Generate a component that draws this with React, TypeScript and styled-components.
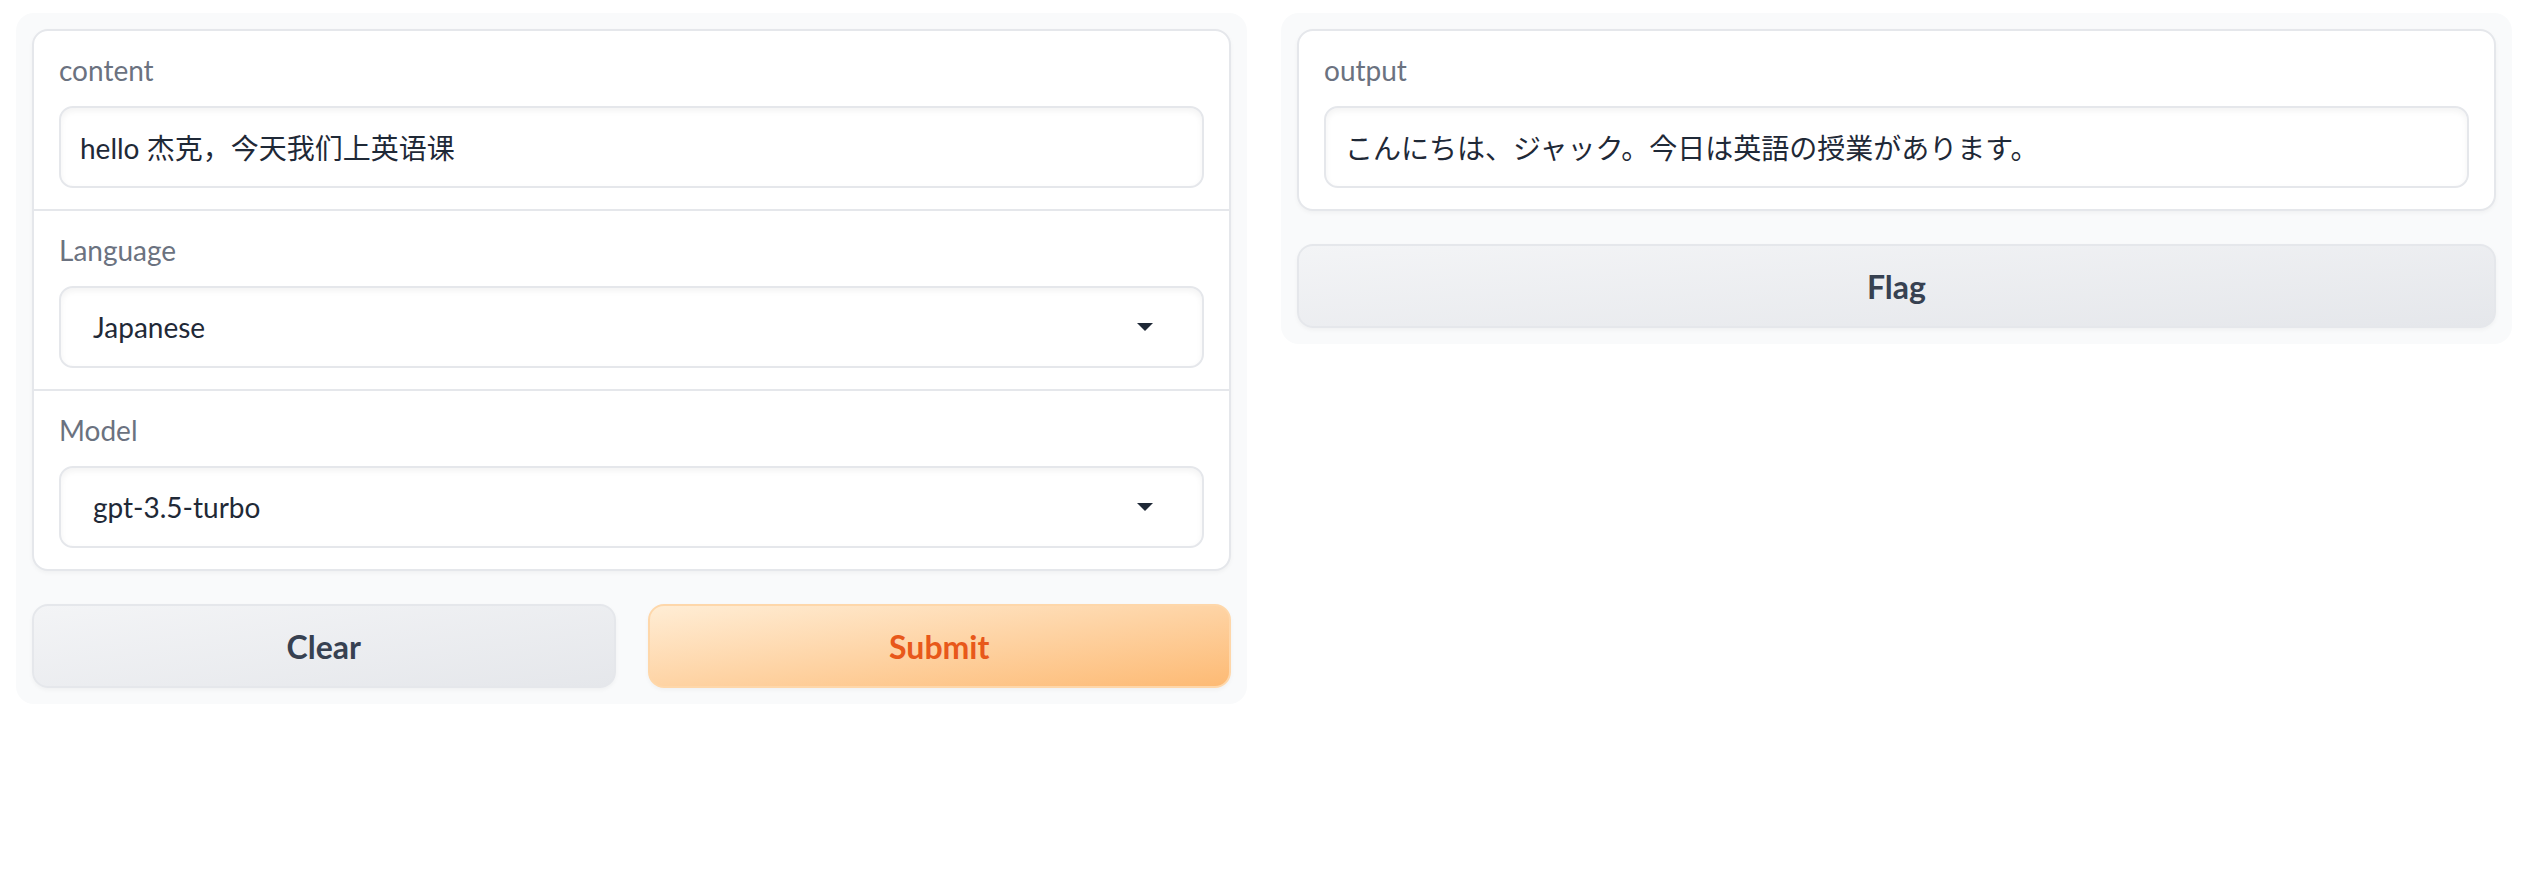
import React from "react";
import styled, { createGlobalStyle } from "styled-components";

const GlobalStyle = createGlobalStyle`
  html, body {
    margin: 0;
    padding: 0;
    background: #ffffff;
  }
  body {
    font-family: "Lato", "Noto Sans CJK SC", sans-serif;
    -webkit-font-smoothing: antialiased;
  }
  * { box-sizing: border-box; }
`;

const Page = styled.div`
  display: flex;
  align-items: flex-start;
  gap: 34px;
  padding: 13px 24px 0 16px;
`;

const Panel = styled.div`
  flex: 1 1 0;
  min-width: 0;
  display: flex;
  flex-direction: column;
  gap: 33px;
  padding: 16px;
  background: #f9fafb;
  border-radius: 18px;
`;

const Form = styled.div`
  display: flex;
  flex-direction: column;
  background: #ffffff;
  border: 2px solid #e5e7eb;
  border-radius: 16px;
  overflow: hidden;
  box-shadow: 0 2px 4px rgba(0, 0, 0, 0.04);
`;

const Field = styled.div`
  display: flex;
  flex-direction: column;
  gap: 15px;
  padding: 18px 25px 21px;
  & + & {
    border-top: 2px solid #e5e7eb;
  }
`;

const Label = styled.span`
  display: block;
  font-size: 28px;
  line-height: 42px;
  color: #6b7280;
`;

const TextBox = styled.input<{ $lang?: string }>`
  display: block;
  width: 100%;
  height: 82px;
  margin: 0;
  padding: 0 19px;
  border: 2px solid #e5e7eb;
  border-radius: 14px;
  background: #ffffff;
  box-shadow: inset 0 3px 6px rgba(0, 0, 0, 0.05);
  font-family: ${(p) =>
    p.$lang === "ja"
      ? `"Lato", "Noto Sans CJK JP", sans-serif`
      : `"Lato", "Noto Sans CJK SC", sans-serif`};
  font-size: 28px;
  line-height: 42px;
  color: #1f2937;
  outline: none;
`;

const Select = styled.div`
  display: flex;
  align-items: center;
  justify-content: space-between;
  height: 82px;
  padding: 0 49px 0 32px;
  border: 2px solid #e5e7eb;
  border-radius: 14px;
  background: #ffffff;
  box-shadow: inset 0 3px 6px rgba(0, 0, 0, 0.05);
  font-size: 28px;
  line-height: 42px;
  color: #1f2937;
`;

const Arrow = styled.svg`
  width: 16px;
  height: 8px;
  flex: none;
`;

const ButtonRow = styled.div`
  display: grid;
  grid-template-columns: 1fr 1fr;
  gap: 32px;
`;

const Button = styled.button<{ $variant?: "primary" | "secondary" }>`
  height: 84px;
  margin: 0;
  border-radius: 16px;
  font-family: "Lato", sans-serif;
  font-size: 32px;
  font-weight: 700;
  cursor: pointer;
  box-shadow: 0 2px 4px rgba(0, 0, 0, 0.04);
  border: 2px solid
    ${(p) => (p.$variant === "primary" ? "#fed7aa" : "#e5e7eb")};
  background: ${(p) =>
    p.$variant === "primary"
      ? "linear-gradient(to bottom right, #ffedd5, #fdba74)"
      : "linear-gradient(to bottom right, #f3f4f6, #e5e7eb)"};
  color: ${(p) => (p.$variant === "primary" ? "#e8581a" : "#374151")};
`;

const Dropdown: React.FC<{ value: string }> = ({ value }) => (
  <Select>
    <span>{value}</span>
    <Arrow viewBox="0 0 16 8">
      <polygon points="0,0 16,0 8,8" fill="#1f2937" />
    </Arrow>
  </Select>
);

export default function App() {
  return (
    <>
      <GlobalStyle />
      <Page>
        <Panel>
          <Form>
            <Field>
              <Label>content</Label>
              <TextBox readOnly value="hello 杰克，今天我们上英语课" />
            </Field>
            <Field>
              <Label>Language</Label>
              <Dropdown value="Japanese" />
            </Field>
            <Field>
              <Label>Model</Label>
              <Dropdown value="gpt-3.5-turbo" />
            </Field>
          </Form>
          <ButtonRow>
            <Button $variant="secondary">Clear</Button>
            <Button $variant="primary">Submit</Button>
          </ButtonRow>
        </Panel>
        <Panel>
          <Form>
            <Field>
              <Label>output</Label>
              <TextBox
                $lang="ja"
                readOnly
                value="こんにちは、ジャック。今日は英語の授業があります。"
              />
            </Field>
          </Form>
          <Button $variant="secondary">Flag</Button>
        </Panel>
      </Page>
    </>
  );
}
